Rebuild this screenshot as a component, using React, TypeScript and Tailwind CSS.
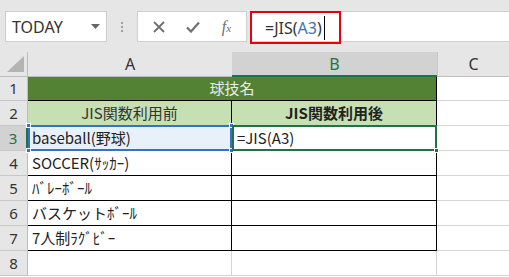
import { ReactNode } from "react";

const rows: { n: number; a: ReactNode; b: ReactNode }[] = [
  { n: 4, a: "SOCCER(ｻｯｶｰ)", b: "" },
  { n: 5, a: "ﾊﾞﾚｰﾎﾞｰﾙ", b: "" },
  { n: 6, a: "バスケットﾎﾞｰﾙ", b: "" },
  { n: 7, a: "7人制ﾗｸﾞﾋﾞｰ", b: "" },
];

function RowHead({ n, active }: { n: number; active?: boolean }) {
  return (
    <div
      className={
        active
          ? "flex items-center justify-center border-r-2 border-r-[#217346] border-b border-b-[#c8c8c8] bg-[#d2d2d2] text-[#217346]"
          : "flex items-center justify-center border-r border-r-[#bdbdbd] border-b border-b-[#c8c8c8] bg-[#e6e6e6] text-[#333]"
      }
    >
      {n}
    </div>
  );
}

function Handle({ className }: { className: string }) {
  return <span className={"absolute w-[5px] h-[5px] border border-white " + className} />;
}

export default function App() {
  return (
    <div className="w-[509px] h-[277px] overflow-hidden bg-white text-[15px] text-[#222] font-['Noto_Sans_CJK_JP','Noto_Sans',sans-serif]">
      {/* Toolbar */}
      <div className="h-[52px] bg-[#e6e6e6] flex items-start pt-[11px] pl-[5px]">
        <div className="w-[102px] h-[31px] bg-white border border-[#cfcfcf] flex items-center justify-between pl-[6px] pr-[6px] font-['Noto_Sans',sans-serif] text-[16px] text-[#333]">
          <span>TODAY</span>
          <svg width="9" height="5" viewBox="0 0 9 5">
            <path d="M0 0h9L4.5 5z" fill="#666" />
          </svg>
        </div>
        <div className="w-[30px] h-[31px] flex flex-col items-center justify-center gap-[2px]">
          <span className="w-[2px] h-[2px] bg-[#a0a0a0]" />
          <span className="w-[2px] h-[2px] bg-[#a0a0a0]" />
          <span className="w-[2px] h-[2px] bg-[#a0a0a0]" />
        </div>
        <div className="w-[110px] h-[31px] bg-white border border-[#cfcfcf] flex items-center justify-around px-[4px]">
          <svg width="12" height="12" viewBox="0 0 12 12">
            <path d="M1 1l10 10M11 1L1 11" stroke="#707070" strokeWidth="1.8" />
          </svg>
          <svg width="14" height="12" viewBox="0 0 14 12">
            <path d="M1 6.5l4 4L13 1.5" stroke="#707070" strokeWidth="2.2" fill="none" />
          </svg>
          <span className="italic font-['Liberation_Serif',serif] text-[16px] text-[#707070] leading-none">
            f<span className="text-[11px]">x</span>
          </span>
        </div>
        <div className="ml-[3px] flex-1 h-[31px] bg-white border-y border-[#cfcfcf] flex">
          <div className="w-[91px] h-[33px] -mt-px border-2 border-[#e8000b] flex items-center pl-[13px] font-['Noto_Sans',sans-serif] text-[16px] text-[#333]">
            <span>=JIS(</span>
            <span className="text-[#3a70c0]">A3</span>
            <span>)</span>
            <span className="ml-[2px] w-px h-[24px] bg-black" />
          </div>
        </div>
      </div>

      {/* Grid */}
      <div className="grid grid-cols-[28px_204px_205px_1fr] grid-rows-[25px_24px_25px_25px_25px_25px_25px_25px_25px] font-['Noto_Sans',sans-serif]">
        {/* column headers */}
        <div className="bg-[#e6e6e6] border-r border-r-[#bdbdbd] border-b border-b-[#bdbdbd] flex items-end justify-end pr-[3px] pb-[4px]">
          <svg width="17" height="16" viewBox="0 0 17 16">
            <path d="M17 0v16H0z" fill="#b4b4b4" />
          </svg>
        </div>
        <div className="bg-[#e6e6e6] border-b border-b-[#bdbdbd] flex items-center justify-center text-[16px] text-[#333]">A</div>
        <div className="bg-[#d2d2d2] border-b-2 border-b-[#217346] flex items-center justify-center text-[16px] text-[#217346]">B</div>
        <div className="bg-[#e6e6e6] border-l border-l-[#c8c8c8] border-b border-b-[#bdbdbd] flex items-center justify-center text-[16px] text-[#333]">C</div>

        {/* row 1 */}
        <RowHead n={1} />
        <div className="col-span-2 bg-[#548235] border-r border-b border-black flex items-center justify-center text-[#ececec] font-['Noto_Sans_CJK_JP',sans-serif]">
          球技名
        </div>
        <div className="border-b border-[#d4d4d4]" />

        {/* row 2 */}
        <RowHead n={2} />
        <div className="bg-[#c6e0b4] border-r border-b border-black flex items-center justify-center font-['Noto_Sans_CJK_JP',sans-serif] text-[#333]">
          JIS関数利用前
        </div>
        <div className="bg-[#c6e0b4] border-r border-b border-black flex items-center justify-center font-bold font-['Noto_Sans_CJK_JP',sans-serif]">
          JIS関数利用後
        </div>
        <div className="border-b border-[#d4d4d4]" />

        {/* row 3 */}
        <RowHead n={3} active />
        <div className="relative bg-[#e8f0fa] border-r border-b border-black flex items-center pl-[4px] font-['Noto_Sans_CJK_JP',sans-serif]">
          baseball(野球)
          <span className="absolute -top-px left-0 -right-px -bottom-px border-2 border-[#3a70c0]" />
          <Handle className="-top-[3px] -left-[2px] bg-[#3a70c0]" />
          <Handle className="-top-[3px] -right-[3px] bg-[#3a70c0]" />
          <Handle className="-bottom-[3px] -left-[2px] bg-[#3a70c0]" />
          <Handle className="-bottom-[3px] -right-[3px] bg-[#3a70c0]" />
        </div>
        <div className="relative border-r border-b border-black flex items-center pl-[5px] font-['Noto_Sans_CJK_JP',sans-serif]">
          =JIS(A3)
          <span className="absolute -top-px left-0 -right-px -bottom-px border-2 border-[#217346]" />
          <Handle className="-bottom-[3px] -right-[3px] bg-[#217346]" />
        </div>
        <div className="border-b border-[#d4d4d4]" />

        {rows.map((r) => (
          <div key={r.n} className="contents">
            <RowHead n={r.n} />
            <div className="border-r border-b border-black flex items-center pl-[4px] font-['Noto_Sans_CJK_JP',sans-serif]">
              {r.a}
            </div>
            <div className="border-r border-b border-black">{r.b}</div>
            <div className="border-b border-[#d4d4d4]" />
          </div>
        ))}

        {/* row 8 */}
        <RowHead n={8} />
        <div className="border-r border-b border-[#d4d4d4]" />
        <div className="border-r border-b border-[#d4d4d4]" />
        <div className="border-b border-[#d4d4d4]" />
      </div>
    </div>
  );
}
